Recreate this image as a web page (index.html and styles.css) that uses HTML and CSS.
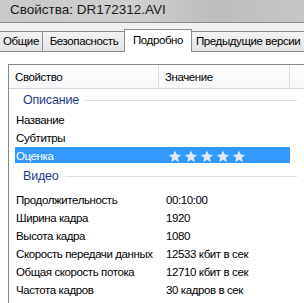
FILE: index.html
```html
<!DOCTYPE html>
<html lang="ru">
<head>
  <meta charset="UTF-8" />
  <title>Свойства: DR172312.AVI</title>
  <link rel="stylesheet" href="styles.css">
</head>
<body>

  <!-- Title bar -->
  <div class="titlebar">Свойства: DR172312.AVI</div>

  <div class="sheet">
    <div class="tabs">
      <div class="tab t1">Общие</div>
      <div class="tab t2">Безопасность</div>
      <div class="tab t3 active">Подробно</div>
      <div class="tab t4">Предыдущие версии</div>
    </div>

    <div class="page">
      <div class="list">
        <div class="head">
          <div class="col c1">Свойство</div>
          <div class="col c2">Значение</div>
          <div class="col c3"></div>
        </div>

        <div class="group"><span>Описание</span><i></i></div>
        <div class="row"><span>Название</span><span></span></div>
        <div class="row"><span>Субтитры</span><span></span></div>
        <div class="row selected">
          <span>Оценка</span>
          <span class="stars">
            <svg viewBox="0 0 24 23"><path d="M12 1l3.2 7 7.6.7-5.8 5 1.8 7.4L12 17.3 5.2 21.1 7 13.7l-5.8-5 7.6-.7z"/></svg>
            <svg viewBox="0 0 24 23"><path d="M12 1l3.2 7 7.6.7-5.8 5 1.8 7.4L12 17.3 5.2 21.1 7 13.7l-5.8-5 7.6-.7z"/></svg>
            <svg viewBox="0 0 24 23"><path d="M12 1l3.2 7 7.6.7-5.8 5 1.8 7.4L12 17.3 5.2 21.1 7 13.7l-5.8-5 7.6-.7z"/></svg>
            <svg viewBox="0 0 24 23"><path d="M12 1l3.2 7 7.6.7-5.8 5 1.8 7.4L12 17.3 5.2 21.1 7 13.7l-5.8-5 7.6-.7z"/></svg>
            <svg viewBox="0 0 24 23"><path d="M12 1l3.2 7 7.6.7-5.8 5 1.8 7.4L12 17.3 5.2 21.1 7 13.7l-5.8-5 7.6-.7z"/></svg>
          </span>
        </div>

        <div class="group second"><span>Видео</span><i></i></div>
        <div class="row"><span>Продолжительность</span><span>00:10:00</span></div>
        <div class="row"><span>Ширина кадра</span><span>1920</span></div>
        <div class="row"><span>Высота кадра</span><span>1080</span></div>
        <div class="row"><span>Скорость передачи данных</span><span>12533 кбит в сек</span></div>
        <div class="row"><span>Общая скорость потока</span><span>12710 кбит в сек</span></div>
        <div class="row"><span>Частота кадров</span><span>30 кадров в сек</span></div>
      </div>
    </div>
  </div>

</body>
</html>
```

FILE: styles.css
```css
body {
  margin: 0;
  padding: 0;
  width: 304px;
  height: 303px;
  overflow: hidden;
  background: #fff;
  font-family: "Liberation Sans", Arial, sans-serif;
  font-size: 11.5px;
  letter-spacing: -0.4px;
  color: #000;
}
.titlebar {
  height: 22px;
  line-height: 19px;
  padding-left: 10px;
  font-size: 13.5px;
  letter-spacing: 0;
  color: #1a1a1a;
  background: linear-gradient(90deg, #c9c9c9 0%, #cfcfcf 45%, #bdbdbd 70%, #c6c6c6 100%);
  border-bottom: 1px solid #8c8c8c;
}
.sheet {
  background: #f0f0f0;
  padding-top: 6px;
}
.tabs {
  display: flex;
  align-items: flex-end;
  height: 22px;
  margin-left: -1px;
  position: relative;
  z-index: 1;
}
.tab {
  flex-shrink: 0;
  box-sizing: border-box;
  height: 20px;
  line-height: 19px;
  text-align: center;
  border: 1px solid #898c95;
  border-bottom: none;
  background: linear-gradient(#f3f3f3, #e4e4e4);
  white-space: nowrap;
  margin-right: -1px;
}
.t1 { width: 44px; }
.t2 { width: 84px; }
.t4 { width: 122px; text-align: left; padding-left: 5px; }
.tab.active {
  height: 23px;
  line-height: 21px;
  background: #fff;
  margin: 0 -2px -1px -1px;
  width: 68px;
  position: relative;
  z-index: 2;
}
.page {
  background: #fff;
  border-top: 1px solid #898c95;
  padding: 12px 0 0 8px;
  height: 238px;
}
.list {
  border-left: 1px solid #828790;
  border-top: 1px solid #828790;
  height: 100%;
}
.head {
  display: flex;
  height: 23px;
  line-height: 24px;
  background: linear-gradient(#ffffff, #f6f7f9);
  border-bottom: 1px solid #d5d5d5;
}
.col {
  box-sizing: border-box;
  border-right: 1px solid #dcdfe3;
}
.c1 { width: 150px; padding-left: 6px; }
.c2 { width: 131px; padding-left: 6px; }
.c3 { flex: 1; border-right: none; }
.group {
  display: flex;
  align-items: center;
  height: 22px;
  margin-left: 6px;
  padding-left: 8px;
  width: 274px;
  color: #1e3a8a;
  font-size: 12.5px;
  letter-spacing: -0.2px;
}
.group.second {
  margin-bottom: 4px;
}
.group i {
  flex: 1;
  height: 1px;
  margin-left: 6px;
  background: #d6dfe9;
}
.row {
  display: grid;
  grid-template-columns: 150px 1fr;
  height: 16px;
  line-height: 18px;
  margin: 0 0 2px 6px;
  width: 275px;
  padding-left: 1px;
  box-sizing: border-box;
  white-space: nowrap;
}
.row span { overflow: visible; }
.row.selected {
  background: #3399ff;
  color: #fff;
}
.stars {
  display: flex;
  align-items: center;
  gap: 2px;
  padding-left: 2px;
}
.stars svg {
  width: 14px;
  height: 13px;
  fill: #dce9f8;
}
```
